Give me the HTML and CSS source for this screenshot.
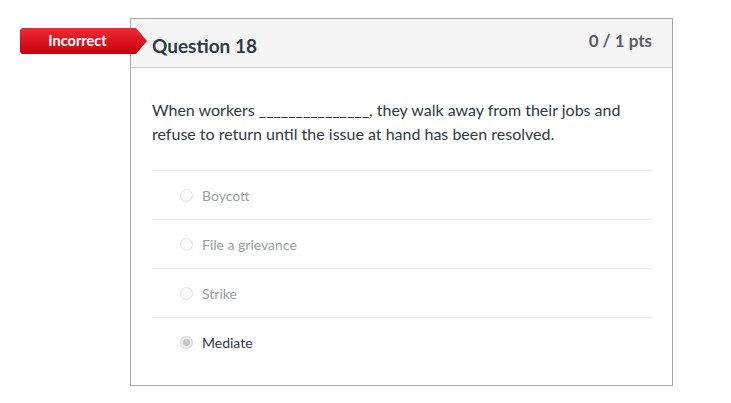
FILE: index.html
```html
<!DOCTYPE html>
<html>
<head>
<meta charset="utf-8">
<link rel="stylesheet" href="styles.css">
</head>
<body>
<div class="page">
  <div class="card">
    <div class="badge">Incorrect</div>
    <div class="header">
      <h2 class="title">Question 18</h2>
      <div class="pts">0 / 1 pts</div>
    </div>
    <div class="content">
      <p class="question">When workers _______________, they walk away from their jobs and refuse to return until the issue at hand has been resolved.</p>
      <div class="answers">
        <div class="answer"><span class="radio"></span><span class="label">Boycott</span></div>
        <div class="answer"><span class="radio"></span><span class="label">File a grievance</span></div>
        <div class="answer"><span class="radio"></span><span class="label">Strike</span></div>
        <div class="answer selected"><span class="radio"></span><span class="label">Mediate</span></div>
      </div>
    </div>
  </div>
</div>
</body>
</html>
```

FILE: styles.css
```css
html, body {
  margin: 0;
  padding: 0;
  background: #fff;
  font-family: Lato, "Open Sans", sans-serif;
}
.page {
  padding: 18px 0 0 130px;
}
.card {
  position: relative;
  width: 541px;
  border: 1px solid #aaa;
  background: #fff;
}
.badge {
  position: absolute;
  left: -111px;
  top: 9px;
  width: 127px;
  height: 26px;
  box-sizing: border-box;
  padding-right: 12px;
  background: linear-gradient(#ee2b35, #c8000b);
  clip-path: polygon(0 2px, 1px 1px, 2px 0, 116px 0, 127px 13px, 116px 26px, 2px 26px, 1px 25px, 0 24px);
  color: #fff;
  font-weight: 700;
  font-size: 14.5px;
  line-height: 26px;
  text-align: center;
}
.header {
  display: flex;
  justify-content: space-between;
  align-items: flex-start;
  height: 48px;
  background: #f5f5f5;
  border-bottom: 1px solid #c7cdd1;
  padding: 0 20px 0 21px;
}
.title {
  margin: 14px 0 0;
  font-size: 19px;
  font-weight: 700;
  color: #2d3b45;
  line-height: 26px;
}
.pts {
  margin-top: 12px;
  font-size: 17px;
  font-weight: 700;
  color: #555e66;
  line-height: 20px;
}
.content {
  padding: 30px 20px 19px 21px;
}
.question {
  margin: 0 0 24px;
  font-size: 16px;
  line-height: 24px;
  color: #2d3b45;
}
.answer {
  display: flex;
  align-items: center;
  height: 48px;
  border-top: 1px solid #e6e9eb;
  padding-left: 28px;
}
.radio {
  width: 11px;
  height: 11px;
  border-radius: 50%;
  border: 1px solid #e4e4e4;
  background: #fafafa;
  margin-right: 9px;
  position: relative;
}
.label {
  font-size: 14px;
  color: #969ea4;
}
.selected .label {
  color: #2d3b45;
}
.selected .radio {
  border-color: #d0d0d0;
  background: #f2f2f2;
}
.selected .radio::after {
  content: "";
  position: absolute;
  left: 2px;
  top: 2px;
  width: 7px;
  height: 7px;
  border-radius: 50%;
  background: #c4c4c4;
}
```
